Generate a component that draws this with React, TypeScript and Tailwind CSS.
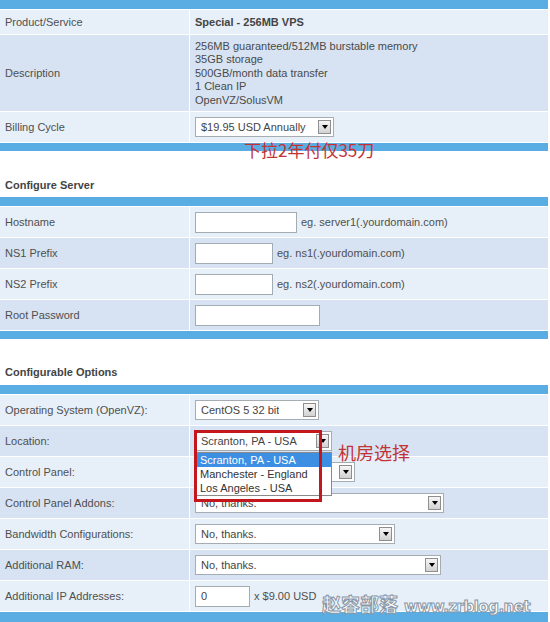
import React from 'react';

type RowProps = {
  label: string;
  dark?: boolean;
  h?: string;
  children?: React.ReactNode;
};

function Bar({ h = 'h-[8px]' }: { h?: string }) {
  return <div className={`${h} w-full bg-[#5aade2]`} />;
}

function Row({ label, dark, h = 'h-[30px]', children }: RowProps) {
  const bg = dark ? 'bg-[#d7e3f2]' : 'bg-[#e7eff8]';
  return (
    <div className={`grid grid-cols-[189px_1fr] gap-px ${h}`}>
      <div className={`flex items-center pl-[5px] ${bg}`}>{label}</div>
      <div className={`flex items-center gap-[4px] pl-[5px] ${bg}`}>{children}</div>
    </div>
  );
}

function Arrow() {
  return (
    <span className="flex h-[14px] w-[13px] shrink-0 items-center justify-center border border-[#8e8e8e] bg-gradient-to-b from-[#f6f6f6] to-[#d2d2d2]">
      <span className="h-0 w-0 border-x-[3px] border-t-[4px] border-x-transparent border-t-black" />
    </span>
  );
}

function Select({ value, w }: { value: string; w: string }) {
  return (
    <div className={`flex h-[20px] items-center justify-between border border-[#a5acb2] bg-white pl-[5px] pr-[2px] text-[#444] ${w}`}>
      <span className="truncate">{value}</span>
      <Arrow />
    </div>
  );
}

function TextBox({ w, value = '' }: { w: string; value?: string }) {
  return (
    <div className={`flex h-[21px] items-center border border-[#a3abb3] bg-white pl-[5px] text-[#444] ${w}`}>
      {value}
    </div>
  );
}

function Heading({ children, pt }: { children: React.ReactNode; pt: string }) {
  return <div className={`h-[46px] pl-[5px] font-bold text-[#444] ${pt}`}>{children}</div>;
}

export default function App() {
  return (
    <div className="relative h-[622px] w-[550px] overflow-hidden bg-white font-['Liberation_Sans',Arial,sans-serif] text-[11px] text-[#4f4f4f]">
      {/* product summary */}
      <div className="flex w-[548px] flex-col gap-px bg-white">
        <Bar h="h-[9px]" />
        <Row label="Product/Service" h="h-[24px]">
          <span className="font-bold text-[#444]">Special - 256MB VPS</span>
        </Row>
        <Row label="Description" dark h="h-[76px]">
          <div className="pt-[1px] leading-[13.5px] text-[#4a4a4a]">
            <div>256MB guaranteed/512MB burstable memory</div>
            <div>35GB storage</div>
            <div>500GB/month data transfer</div>
            <div>1 Clean IP</div>
            <div>OpenVZ/SolusVM</div>
          </div>
        </Row>
        <Row label="Billing Cycle">
          <Select value="$19.95 USD Annually" w="w-[139px]" />
        </Row>
        <Bar />
      </div>

      <Heading pt="pt-[26px]">Configure Server</Heading>

      <div className="flex w-[548px] flex-col gap-px bg-white">
        <Bar h="h-[9px]" />
        <Row label="Hostname">
          <TextBox w="w-[102px]" />
          <span>eg. server1(.yourdomain.com)</span>
        </Row>
        <Row label="NS1 Prefix" dark>
          <TextBox w="w-[78px]" />
          <span>eg. ns1(.yourdomain.com)</span>
        </Row>
        <Row label="NS2 Prefix">
          <TextBox w="w-[78px]" />
          <span>eg. ns2(.yourdomain.com)</span>
        </Row>
        <Row label="Root Password" dark>
          <TextBox w="w-[125px]" />
        </Row>
        <Bar />
      </div>

      <Heading pt="pt-[25px]">Configurable Options</Heading>

      <div className="flex w-[548px] flex-col gap-px bg-white">
        <Bar h="h-[9px]" />
        <Row label="Operating System (OpenVZ):">
          <Select value="CentOS 5 32 bit" w="w-[124px]" />
        </Row>
        <Row label="Location:" dark>
          <Select value="Scranton, PA - USA" w="w-[137px]" />
        </Row>
        <Row label="Control Panel:">
          <Select value="" w="w-[160px]" />
        </Row>
        <Row label="Control Panel Addons:" dark>
          <Select value="No, thanks." w="w-[249px]" />
        </Row>
        <Row label="Bandwidth Configurations:">
          <Select value="No, thanks." w="w-[200px]" />
        </Row>
        <Row label="Additional RAM:" dark>
          <Select value="No, thanks." w="w-[246px]" />
        </Row>
        <Row label="Additional IP Addresses:">
          <TextBox w="w-[55px]" value="0" />
          <span>x $9.00 USD</span>
        </Row>
        <Bar h="h-[12px]" />
      </div>

      {/* open location list */}
      <div className="absolute left-[195px] top-[452px] w-[137px] border border-[#8a8a8a] bg-white leading-[14px] text-[#333]">
        <div className="bg-[#3d8fe3] pl-[4px] text-white">Scranton, PA - USA</div>
        <div className="pl-[4px]">Manchester - England</div>
        <div className="pl-[4px]">Los Angeles - USA</div>
      </div>
      <div className="absolute left-[194px] top-[430px] h-[72px] w-[128px] border-[3px] border-[#c3161d]" />

      {/* notes */}
      <div className="absolute left-[244px] top-[140px] font-['Noto_Sans_CJK_SC',sans-serif] text-[17px] leading-[20px] text-[#c23336]">
        下拉2年付仅35刀
      </div>
      <div className="absolute left-[338px] top-[441px] font-['Noto_Sans_CJK_SC',sans-serif] text-[18px] leading-[22px] text-[#c23336]">
        机房选择
      </div>

      <div className="absolute left-[322px] top-[591px] flex items-baseline gap-[6px] whitespace-nowrap font-bold text-white [-webkit-text-stroke:1px_#8696a6]">
        <span className="font-['Noto_Sans_CJK_SC',sans-serif] text-[19px] leading-[26px]">赵容部落</span>
        <span className="font-['DejaVu_Sans',sans-serif] text-[15px] leading-[26px] tracking-[-0.5px]">www.zrblog.net</span>
      </div>
    </div>
  );
}
